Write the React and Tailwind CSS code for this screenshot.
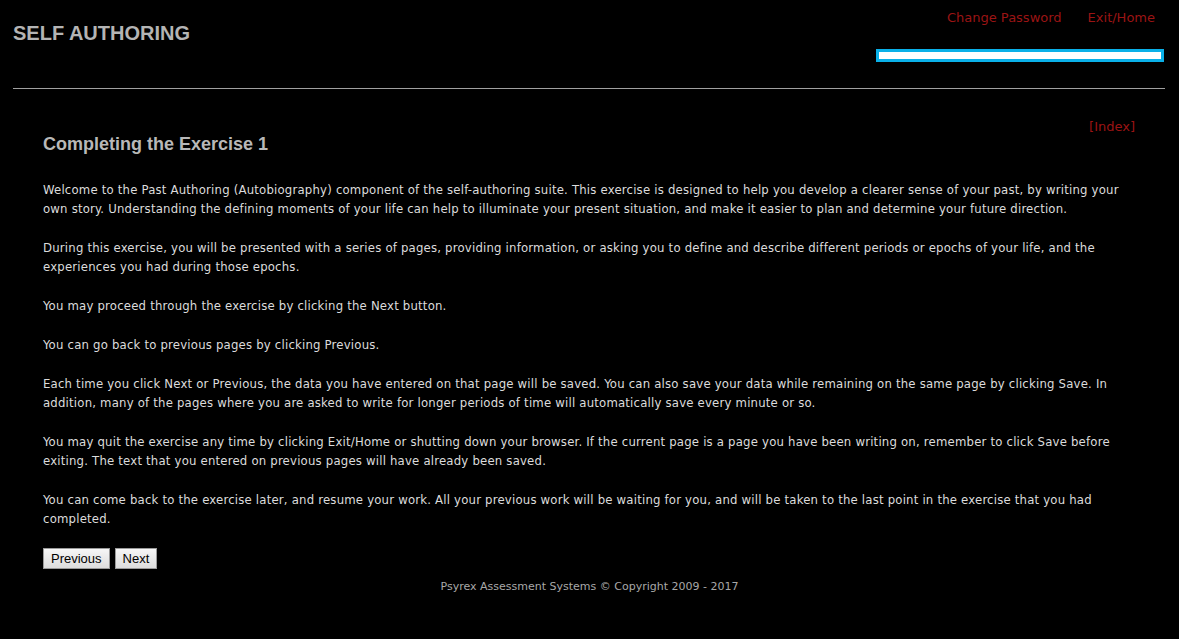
import React from "react";

const body = "font-['DejaVu_Sans_Condensed','DejaVu_Sans',sans-serif] tracking-[0.2px]";
const wide = "font-['DejaVu_Sans',Verdana,sans-serif]";

const paras = [
  [
    "Welcome to the Past Authoring (Autobiography) component of the self-authoring suite. This exercise is designed to help you develop a clearer sense of your past, by writing your",
    "own story. Understanding the defining moments of your life can help to illuminate your present situation, and make it easier to plan and determine your future direction.",
  ],
  [
    "During this exercise, you will be presented with a series of pages, providing information, or asking you to define and describe different periods or epochs of your life, and the",
    "experiences you had during those epochs.",
  ],
  ["You may proceed through the exercise by clicking the Next button."],
  ["You can go back to previous pages by clicking Previous."],
  [
    "Each time you click Next or Previous, the data you have entered on that page will be saved. You can also save your data while remaining on the same page by clicking Save. In",
    "addition, many of the pages where you are asked to write for longer periods of time will automatically save every minute or so.",
  ],
  [
    "You may quit the exercise any time by clicking Exit/Home or shutting down your browser. If the current page is a page you have been writing on, remember to click Save before",
    "exiting. The text that you entered on previous pages will have already been saved.",
  ],
  [
    "You can come back to the exercise later, and resume your work. All your previous work will be waiting for you, and will be taken to the last point in the exercise that you had",
    "completed.",
  ],
];

export default function App() {
  return (
    <div className="min-h-[639px] w-full bg-black">
      <header className="flex justify-between pl-[13px] pr-[15px] h-[88px]">
        <h1 className="pt-[22px] font-['Liberation_Sans',Arial,sans-serif] font-bold text-[20px] leading-[23px] text-[#b4b4b4]">
          SELF AUTHORING
        </h1>
        <div className="flex flex-col items-end pt-[10px]">
          <nav className={`flex gap-[26px] pr-[9px] text-[13px] leading-[16px] text-[#9b1414] ${wide}`}>
            <a href="#">Change Password</a>
            <a href="#">Exit/Home</a>
          </nav>
          <div className="mt-[23px] w-[288px] h-[13px] border-[3px] border-[#0ab0e8] bg-white" />
        </div>
      </header>
      <div className="mx-[13px] w-[1152px] h-px bg-[#a0a0a0]" />
      <main className={`px-[43px] pt-[28px] text-[13px] text-[#dcdcdc]`}>
        <div className="relative">
          <a href="#" className={`absolute right-[1px] top-[2px] text-[#9b1414] leading-[16px] ${wide}`}>[Index]</a>
          <h2 className="pt-[17px] font-['Liberation_Sans',Arial,sans-serif] font-bold text-[18px] leading-[20px] text-[#b8b8b8]">
            Completing the Exercise 1
          </h2>
        </div>
        <div className={`mt-[26px] ${body}`}>
          {paras.map((lines, i) => (
            <p key={i} className="mb-[20px] leading-[19px] whitespace-nowrap">
              {lines.map((l, j) => (
                <React.Fragment key={j}>
                  {l}
                  {j < lines.length - 1 && <br />}
                </React.Fragment>
              ))}
            </p>
          ))}
        </div>
        <div className="flex gap-[5px] font-['Liberation_Sans',Arial,sans-serif] text-[13px]">
          <button className="h-[21px] px-[7px] border border-[#9a9a9a] bg-gradient-to-b from-[#f6f6f6] to-[#dddddd] text-black leading-[19px]">
            Previous
          </button>
          <button className="h-[21px] px-[7px] border border-[#9a9a9a] bg-gradient-to-b from-[#f6f6f6] to-[#dddddd] text-black leading-[19px]">
            Next
          </button>
        </div>
        <footer className={`mt-[11px] text-center text-[11px] leading-[14px] text-[#a8a8a8] ${wide}`}>
          Psyrex Assessment Systems © Copyright 2009 - 2017
        </footer>
      </main>
    </div>
  );
}
